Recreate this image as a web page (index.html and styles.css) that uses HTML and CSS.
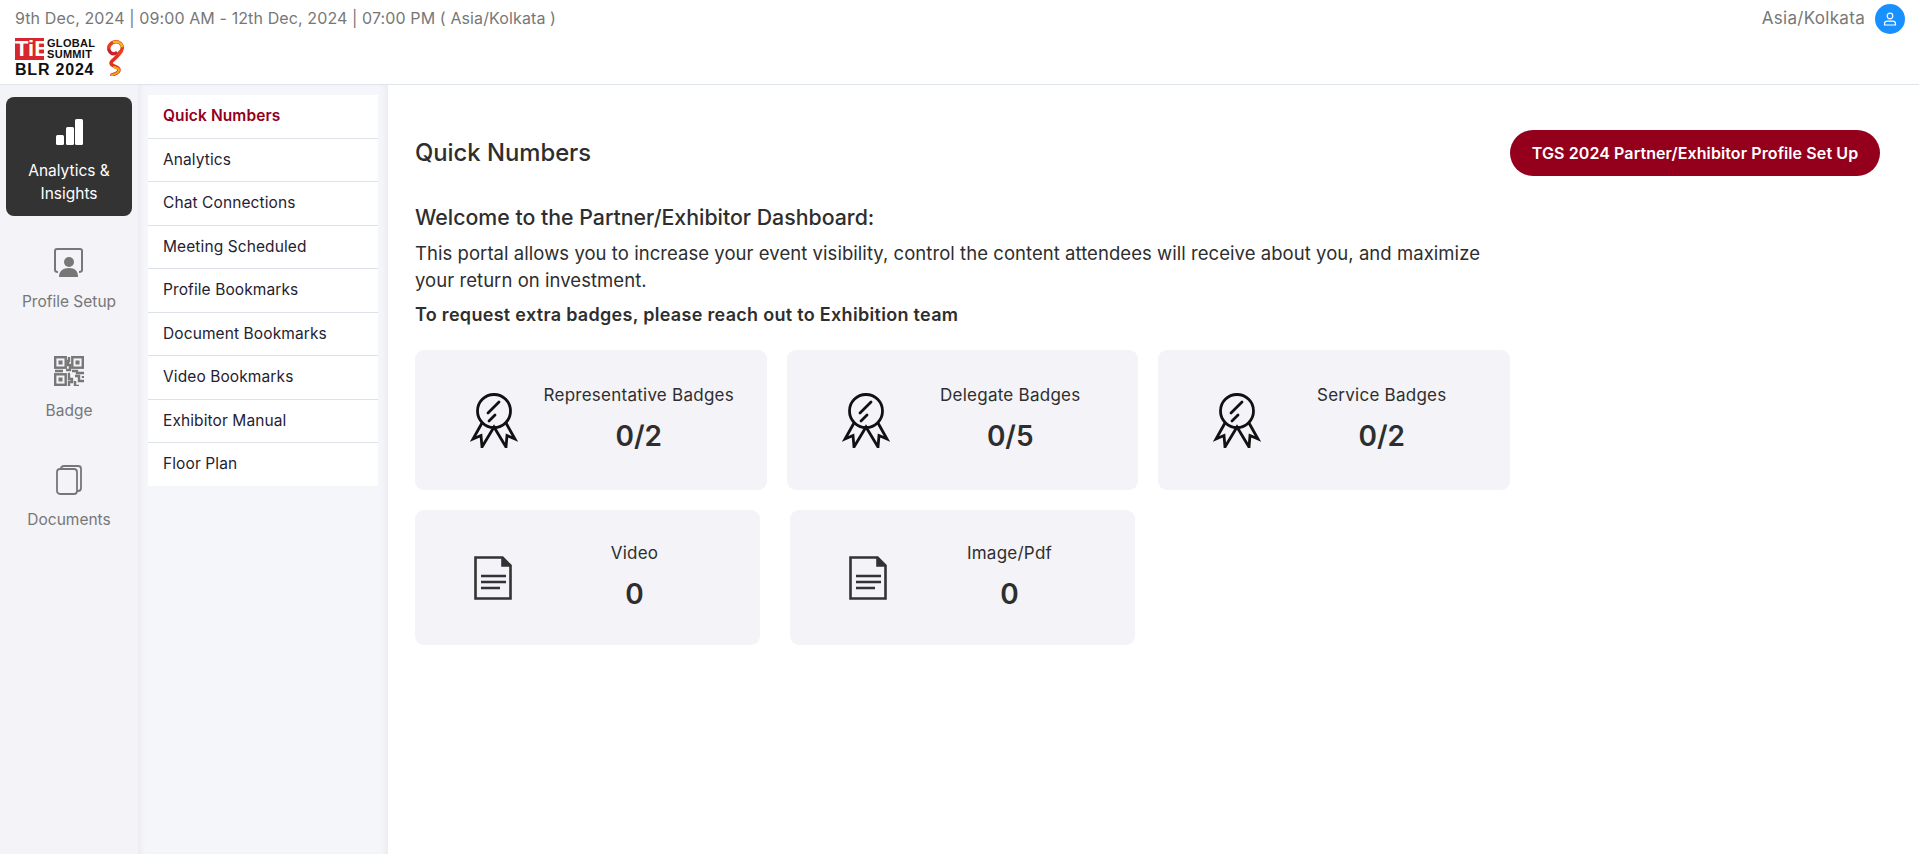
FILE: index.html
```html
<!DOCTYPE html>
<html lang="en">
<head>
    <meta charset="UTF-8">
    <meta name="viewport" content="width=device-width, initial-scale=1.0">
    <title>Quick Numbers</title>
    <link rel="stylesheet" href="styles.css">
</head>
<body>

    <div class="header">
        <div class="header-left">
            <div class="event-date">9th Dec, 2024 | 09:00 AM - 12th Dec, 2024 | 07:00 PM ( Asia/Kolkata )</div>
            <div class="logo">
                <div class="logo-text">
                    <div class="logo-top">
                        <span class="logo-tie">TiE</span>
                        <span class="logo-global">GLOBAL<br>SUMMIT</span>
                    </div>
                    <div class="logo-blr">BLR 2024</div>
                </div>
                <svg class="logo-flame" width="18" height="36" viewBox="0 0 18 36" fill="none" stroke-linecap="round">
                    <path d="M14 12c-2 6-9 8-9 11 0 4 8 3 8 7 0 3-4 4-7 5" stroke="#e0301e" stroke-width="3.500"/>
                    <path d="M8 27c2 1 5 1 5 3 0 3-4 4-7 5" stroke="#f2a71b" stroke-width="2"/>
                    <path d="M13 14c3-3 4-5 3-8-1-3-4-5-8-4-4 1-6 5-5 8 1 3 4 5 7 3" stroke="#e8401c" stroke-width="3.500"/>
                    <path d="M16 6c-1-3-4-5-8-4" stroke="#f5b324" stroke-width="2.500"/>
                    <path d="M3 10c1 3 4 5 7 3" stroke="#c41e3a" stroke-width="2.500"/>
                </svg>
            </div>
        </div>
        <div class="header-right">
            <span class="timezone">Asia/Kolkata</span>
            <span class="user-icon">
                <svg width="14" height="14" viewBox="0 0 14 14" fill="none" stroke="#fff" stroke-width="1.200">
                    <circle cx="7" cy="4" r="2.800"/>
                    <path d="M1.500 13v-1.200c0-1.600 1.200-2.600 2.800-2.600h5.400c1.600 0 2.800 1 2.800 2.600V13z"/>
                </svg>
            </span>
        </div>
    </div>

    <div class="page">
        <div class="rail">
            <div class="rail-item active">
                <svg width="28" height="28" viewBox="0 0 28 28" fill="#fff">
                    <rect x="1" y="17" width="8" height="10" rx="1.500"/>
                    <rect x="11" y="9" width="8" height="18" rx="1.500"/>
                    <rect x="20" y="1" width="8" height="26" rx="1.500"/>
                </svg>
                <span>Analytics &amp; Insights</span>
            </div>
            <div class="rail-item">
                <svg width="30" height="30" viewBox="0 0 30 30" fill="none" stroke="#777" stroke-width="2">
                    <path d="M4 25c-2 0-3-1-3-2V4c0-1 1-2 2-2h23c1 0 2 1 2 2v19c0 1-1 2-3 2"/>
                    <circle cx="15" cy="15" r="5" fill="#777" stroke="none"/>
                    <path d="M5 30c0-6 4-9 10-9s9 3 9 9z" fill="#777" stroke="none"/>
                </svg>
                <span>Profile Setup</span>
            </div>
            <div class="rail-item">
                <svg width="30" height="30" viewBox="0 0 30 30" fill="none" stroke="#777" stroke-width="2.400">
                    <rect x="1.200" y="1.200" width="10.500" height="10.500"/>
                    <rect x="18.300" y="1.200" width="10.500" height="10.500"/>
                    <rect x="1.200" y="18.300" width="10.500" height="10.500"/>
                    <rect x="4.500" y="4.500" width="4" height="4" fill="#777" stroke="none"/>
                    <rect x="21.500" y="4.500" width="4" height="4" fill="#777" stroke="none"/>
                    <rect x="4.500" y="21.500" width="4" height="4" fill="#777" stroke="none"/>
                    <path d="M15 1v4h-1v4h2v5h-4M1 15h8M18 15h5v2h7M16 18h-1v5h3v3h-3v4M21 20h4v5h5M21 25v5h4M29 20v2"/>
                </svg>
                <span>Badge</span>
            </div>
            <div class="rail-item">
                <svg width="26" height="30" viewBox="0 0 26 30" fill="none" stroke="#777" stroke-width="1.800">
                    <rect x="1" y="4" width="20" height="25" rx="3"/>
                    <path d="M5 4V3.500C5 2 6 1 8 1h14c2 0 3 1 3 2.500V23c0 2-1 3-3 3h-1"/>
                </svg>
                <span>Documents</span>
            </div>
        </div>

        <div class="submenu">
            <ul class="submenu-list">
                <li class="current">Quick Numbers</li>
                <li>Analytics</li>
                <li>Chat Connections</li>
                <li>Meeting Scheduled</li>
                <li>Profile Bookmarks</li>
                <li>Document Bookmarks</li>
                <li>Video Bookmarks</li>
                <li>Exhibitor Manual</li>
                <li>Floor Plan</li>
            </ul>
        </div>

        <div class="content">
            <div class="content-head">
                <h2>Quick Numbers</h2>
                <button class="setup-btn">TGS 2024 Partner/Exhibitor Profile Set Up</button>
            </div>

            <h3>Welcome to the Partner/Exhibitor Dashboard:</h3>
            <p class="intro">This portal allows you to increase your event visibility, control the content attendees will receive about you, and maximize your return on investment.</p>
            <p class="note">To request extra badges, please reach out to Exhibition team</p>

            <div class="cards">
                <div class="card badge-card">
                    <svg class="medal" width="48" height="56" viewBox="0 0 48 56" fill="none" stroke="#111" stroke-width="2.800" stroke-linecap="round">
                        <circle cx="24" cy="19" r="16.500"/>
                        <path d="M29 10L18 21M25 23l-6 6"/>
                        <path d="M12 31L3 47l8-3.500L12 55l12-20 12 20 1-11.500L45 47 36 31"/>
                    </svg>
                    <div class="card-info">
                        <div class="card-label">Representative Badges</div>
                        <div class="card-value">0/2</div>
                    </div>
                </div>
                <div class="card badge-card">
                    <svg class="medal" width="48" height="56" viewBox="0 0 48 56" fill="none" stroke="#111" stroke-width="2.800" stroke-linecap="round">
                        <circle cx="24" cy="19" r="16.500"/>
                        <path d="M29 10L18 21M25 23l-6 6"/>
                        <path d="M12 31L3 47l8-3.500L12 55l12-20 12 20 1-11.500L45 47 36 31"/>
                    </svg>
                    <div class="card-info">
                        <div class="card-label">Delegate Badges</div>
                        <div class="card-value">0/5</div>
                    </div>
                </div>
                <div class="card badge-card">
                    <svg class="medal" width="48" height="56" viewBox="0 0 48 56" fill="none" stroke="#111" stroke-width="2.800" stroke-linecap="round">
                        <circle cx="24" cy="19" r="16.500"/>
                        <path d="M29 10L18 21M25 23l-6 6"/>
                        <path d="M12 31L3 47l8-3.500L12 55l12-20 12 20 1-11.500L45 47 36 31"/>
                    </svg>
                    <div class="card-info">
                        <div class="card-label">Service Badges</div>
                        <div class="card-value">0/2</div>
                    </div>
                </div>
            </div>

            <div class="cards second">
                <div class="card file-card">
                    <svg class="doc" width="38" height="44" viewBox="0 0 38 44" fill="none" stroke="#333" stroke-width="2.600">
                        <path d="M1.500 1.500h27l8 8v33h-35z"/>
                        <path d="M28.500 1.500v8h8" fill="#333"/>
                        <path d="M7 20h25M7 26h25M7 32h19"/>
                    </svg>
                    <div class="card-info">
                        <div class="card-label">Video</div>
                        <div class="card-value">0</div>
                    </div>
                </div>
                <div class="card file-card">
                    <svg class="doc" width="38" height="44" viewBox="0 0 38 44" fill="none" stroke="#333" stroke-width="2.600">
                        <path d="M1.500 1.500h27l8 8v33h-35z"/>
                        <path d="M28.500 1.500v8h8" fill="#333"/>
                        <path d="M7 20h25M7 26h25M7 32h19"/>
                    </svg>
                    <div class="card-info">
                        <div class="card-label">Image/Pdf</div>
                        <div class="card-value">0</div>
                    </div>
                </div>
            </div>
        </div>
    </div>

</body>
</html>
```

FILE: styles.css
```css
/* Podstawowy styl strony */
* {
    box-sizing: border-box;
}

body {
    font-family: Inter, "Noto Sans", sans-serif;
    margin: 0;
    height: 854px;
    overflow: hidden;
    background-color: white;
    color: #2e2e2e;
}

/* Naglowek */
.header {
    display: flex;
    justify-content: space-between;
    height: 85px;
    padding: 4px 14px 0 15px;
    border-bottom: 1px solid #dfe3ea;
}

.event-date {
    font-size: 16px;
    line-height: 28px;
    letter-spacing: 0.11px;
    color: #777;
}

.logo {
    display: flex;
    align-items: center;
    gap: 11px;
    margin-top: 6px;
}

.logo-top {
    display: flex;
    align-items: center;
    gap: 3px;
}

.logo-tie {
    width: 29px;
    background-color: #d8262e;
    color: white;
    font-family: "Liberation Sans", sans-serif;
    font-size: 22px;
    font-weight: bold;
    line-height: 22px;
    text-align: center;
}

.logo-global {
    font-family: "Liberation Sans", sans-serif;
    font-size: 11px;
    font-weight: bold;
    line-height: 11px;
    letter-spacing: 0.3px;
    color: #111;
}

.logo-blr {
    margin-top: 1px;
    font-family: "Liberation Sans", sans-serif;
    font-size: 16px;
    font-weight: bold;
    line-height: 17px;
    letter-spacing: 0.8px;
    color: #111;
}

.header-right {
    display: flex;
    align-items: flex-start;
    gap: 10px;
}

.timezone {
    font-size: 17px;
    line-height: 28px;
    letter-spacing: 0.3px;
    color: #777;
}

.user-icon {
    display: flex;
    align-items: center;
    justify-content: center;
    width: 30px;
    height: 30px;
    border-radius: 50%;
    background-color: #1890ff;
}

/* Uklad strony */
.page {
    display: flex;
    height: 769px;
}

.rail {
    width: 138px;
    padding: 12px 6px 0;
    background-color: #f3f3f8;
}

.rail-item {
    display: flex;
    flex-direction: column;
    align-items: center;
    height: 109px;
    padding-top: 18px;
    font-size: 15.5px;
    line-height: 23px;
    color: #777;
    text-align: center;
}

.rail-item svg {
    margin-bottom: 13px;
}

.rail-item.active {
    height: 119px;
    margin-bottom: 13px;
    padding: 21px 10px 0;
    border-radius: 8px;
    background-color: #333;
    color: white;
}

.submenu {
    width: 250px;
    padding: 10px 10px 0;
    background-color: #f5f6fa;
    box-shadow: inset 6px 0 6px -4px #e8e8ee, inset -6px 0 6px -4px #e8e8ee;
}

.submenu-list {
    list-style: none;
    margin: 0;
    padding: 0;
    background-color: white;
}

.submenu-list li {
    height: 43.5px;
    padding-left: 15px;
    font-size: 15.5px;
    line-height: 42.5px;
    letter-spacing: 0.1px;
    color: #1f2233;
    border-bottom: 1px solid #dfe1e8;
}

.submenu-list li:last-child {
    height: 43px;
    border-bottom: none;
}

.submenu-list .current {
    color: #94001c;
    font-weight: 600;
}

/* Glowna czesc */
.content {
    flex: 1;
    padding: 45px 39px 0 27px;
}

.content-head {
    display: flex;
    justify-content: space-between;
    align-items: center;
    height: 46px;
    margin-bottom: 26px;
}

h2 {
    font-size: 23.8px;
    font-weight: 500;
    margin: 0 0 2px;
}

.setup-btn {
    width: 370px;
    height: 46px;
    border: none;
    border-radius: 23px;
    background-color: #94001c;
    color: white;
    font-family: inherit;
    font-size: 16px;
    font-weight: 600;
    letter-spacing: 0.1px;
    cursor: pointer;
}

h3 {
    font-size: 21.3px;
    font-weight: 500;
    line-height: 30px;
    margin: 0 0 8px;
}

.intro {
    width: 1094px;
    font-size: 18.5px;
    line-height: 27px;
    letter-spacing: 0.05px;
    margin: 0 0 8px;
}

.note {
    font-size: 18px;
    font-weight: 600;
    line-height: 26px;
    letter-spacing: 0.3px;
    margin: 0 0 22px;
}

.cards {
    display: flex;
    gap: 20px;
}

.cards.second {
    gap: 30px;
    margin-top: 20px;
}

.card {
    display: flex;
    align-items: center;
    border-radius: 9px;
    background-color: #f3f3f8;
}

.badge-card {
    width: 351.5px;
    height: 140px;
    padding-left: 55px;
}

.file-card {
    width: 345px;
    height: 135px;
    padding-left: 59px;
}

.card-info {
    flex: 1;
    text-align: center;
}

.badge-card .card-info {
    padding-right: 7px;
}

.file-card .card-info {
    padding-right: 3px;
}

.card-label {
    font-size: 17px;
    line-height: 24px;
    letter-spacing: 0.25px;
    margin-bottom: 8px;
}

.card-value {
    font-size: 28px;
    font-weight: 600;
    line-height: 42px;
}
```
